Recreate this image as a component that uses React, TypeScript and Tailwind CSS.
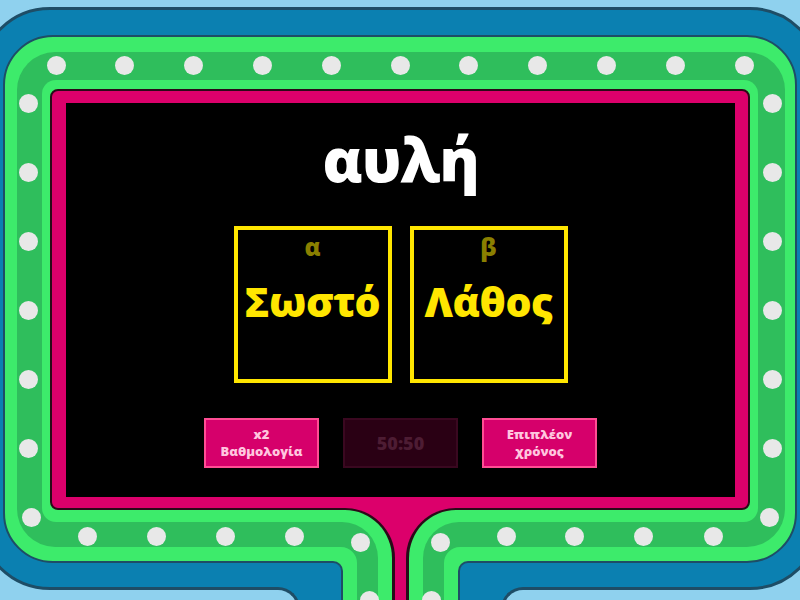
import React from "react";

const dots: [number, number][] = [];
for (let i = 0; i < 11; i++) dots.push([56 + i * 68.8, 65]);
for (let j = 0; j < 7; j++) dots.push([j === 6 ? 31 : 28.5, 103 + j * 69]);
for (let j = 0; j < 7; j++) dots.push([j === 6 ? 769 : 772, 103 + j * 69]);
[87, 156, 225, 294].forEach((x) => dots.push([x, 536]));
[506, 574, 643, 713].forEach((x) => dots.push([x, 536]));
dots.push([360, 542], [440, 542], [369, 600], [431, 600]);

function Answer({ letter, word }: { letter: string; word: string }) {
  return (
    <div className="w-[158px] h-[157px] border-4 border-[#ffe600] flex flex-col items-center">
      <div className="mt-[5px] text-[24px] leading-none font-extrabold text-[#8a7f00]">{letter}</div>
      <div className="mt-[22px] text-[41px] leading-none font-extrabold tracking-[-0.5px] text-[#ffe600]">{word}</div>
    </div>
  );
}

function PinkButton({ top, bottom }: { top: string; bottom: string }) {
  return (
    <div className="w-[115px] h-[50px] border-2 border-[#ff4d94] bg-[#d6006b] flex flex-col items-center justify-center gap-0 text-[13px] leading-[17px] font-extrabold text-[#ffc6df]">
      <span>{top}</span>
      <span>{bottom}</span>
    </div>
  );
}

export default function App() {
  return (
    <div className="relative w-[800px] h-[600px] overflow-hidden bg-[#8fd1ee] pt-[7px] font-['Open_Sans','Noto_Sans',sans-serif]">
      {/* outer blue */}
      <div className="ml-[-22px] w-[844px] h-[583px] rounded-[72px] border-[3px] border-[#1e4d66] bg-[#0b80b1] pt-[25px] pb-[24px] px-[22px]">
        {/* green band */}
        <div className="h-full rounded-[50px] border-2 border-[#1e4d66] bg-[#3deb6b] pt-[15px] pl-[12px] pr-[10px] pb-[14px]">
          <div className="h-full rounded-[38px] bg-[#2fbe5c] pt-[28px] pl-[25px] pr-[27px] pb-[25px]">
            <div className="h-full rounded-[14px] bg-[#3deb6b] pt-[9px] px-[8px] pb-[12px]">
              {/* pink frame */}
              <div className="h-full rounded-[8px] border-2 border-[#2a0a18] bg-[#dc006b] pt-[12px] pl-[14px] pr-[13px] pb-[11px]">
                {/* screen */}
                <div className="h-full bg-black flex flex-col items-center">
                  <div className="mt-[26px] text-[60px] leading-none font-extrabold tracking-[-1px] text-white">αυλή</div>
                  <div className="mt-[37px] flex gap-[18px]">
                    <Answer letter="α" word="Σωστό" />
                    <Answer letter="β" word="Λάθος" />
                  </div>
                  <div className="mt-[35px] flex gap-[24px]">
                    <PinkButton top="x2" bottom="Βαθμολογία" />
                    <div className="w-[115px] h-[50px] border-2 border-[#3a0820] bg-[#2a0014] flex items-center justify-center text-[18px] leading-none font-extrabold text-[#4d1c33]">
                      50:50
                    </div>
                    <PinkButton top="Επιπλέον" bottom="χρόνος" />
                  </div>
                </div>
              </div>
            </div>
          </div>
        </div>
      </div>

      {/* stand / stem at bottom centre */}
      <div className="absolute left-[200px] top-[506px] w-[400px] h-[94px] overflow-hidden">
        <div className="absolute left-[130px] top-0 w-[140px] h-[94px] bg-[#dc006b]" />
        <div className="absolute left-0 top-[2px] w-[195px] h-[120px] rounded-tr-[50px] border-t-2 border-r-[3px] border-[#2a0a18] bg-[#3deb6b] pt-[12px] pr-[14px]">
          <div className="h-full rounded-tr-[36px] bg-[#2fbe5c] pt-[25px] pr-[21px]">
            <div className="h-full rounded-tr-[16px] bg-[#3deb6b] pt-[14px] pr-[14px]">
              <div className="h-full rounded-tr-[10px] border-t-2 border-r-2 border-[#1e4d66] bg-[#0b80b1] pt-[24px] pr-[41px]">
                <div className="h-full rounded-tr-[22px] border-t-[3px] border-r-[3px] border-[#1e4d66] bg-[#8fd1ee]" />
              </div>
            </div>
          </div>
        </div>
        <div className="absolute left-[206px] top-[2px] w-[194px] h-[120px] rounded-tl-[50px] border-t-2 border-l-[3px] border-[#2a0a18] bg-[#3deb6b] pt-[12px] pl-[14px]">
          <div className="h-full rounded-tl-[36px] bg-[#2fbe5c] pt-[25px] pl-[21px]">
            <div className="h-full rounded-tl-[16px] bg-[#3deb6b] pt-[14px] pl-[14px]">
              <div className="h-full rounded-tl-[10px] border-t-2 border-l-2 border-[#1e4d66] bg-[#0b80b1] pt-[24px] pl-[41px]">
                <div className="h-full rounded-tl-[22px] border-t-[3px] border-l-[3px] border-[#1e4d66] bg-[#8fd1ee]" />
              </div>
            </div>
          </div>
        </div>
      </div>

      {/* marquee lights */}
      {dots.map(([x, y], i) => (
        <div
          key={i}
          className="absolute w-[19px] h-[19px] rounded-full bg-[#e8e8e8]"
          style={{ left: x - 9.5, top: y - 9.5 }}
        />
      ))}
    </div>
  );
}
